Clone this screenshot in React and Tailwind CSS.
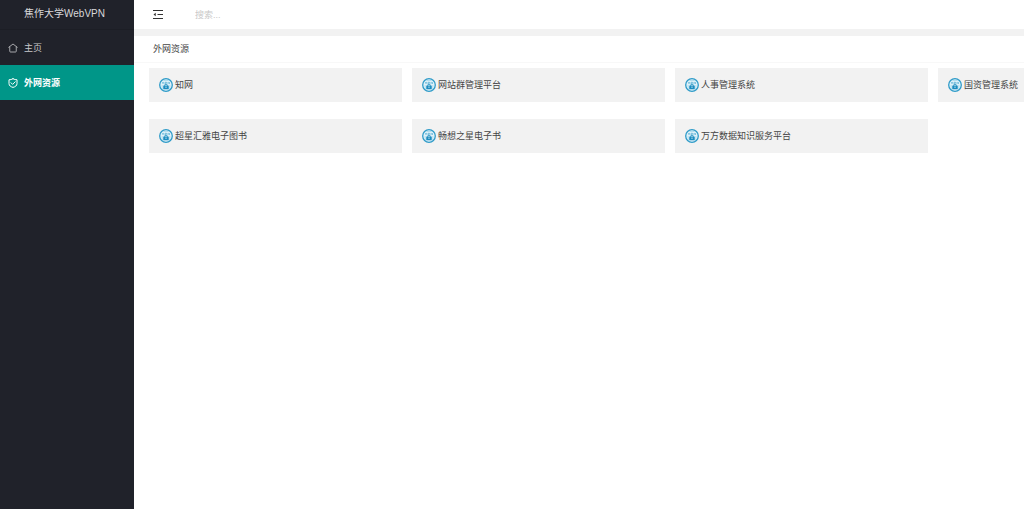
import React from 'react';

const resources = [
  '知网',
  '网站群管理平台',
  '人事管理系统',
  '国资管理系统',
  '超星汇雅电子图书',
  '畅想之星电子书',
  '万方数据知识服务平台',
];

function HomeIcon() {
  return (
    <svg viewBox="0 0 20 20" className="size-[10px] shrink-0" fill="none" stroke="currentColor" strokeWidth="1.6" strokeLinejoin="round" strokeLinecap="round" aria-hidden="true">
      <path d="M1.500 8.500 10 2l8.500 6.500M3.500 8v8.500q0 1.500 1.500 1.500h10q1.500 0 1.500-1.500V8" />
    </svg>
  );
}

function ShieldIcon() {
  return (
    <svg viewBox="0 0 20 20" className="size-[10px] shrink-0" fill="none" stroke="currentColor" strokeWidth="2" strokeLinejoin="round" strokeLinecap="round" aria-hidden="true">
      <path d="M10 1.500C7.500 3 5 3.500 2 3.500V11c0 4.500 3.500 6.500 8 7.800 4.500-1.300 8-3.300 8-7.800V3.500c-3 0-5.500-.5-8-2Z" />
      <path d="m6 9.500 3.200 3.200L14.500 7.500" />
    </svg>
  );
}

function FoldIcon() {
  return (
    <svg viewBox="0 0 20 18" className="h-[9px] w-[10px]" fill="none" stroke="currentColor" strokeWidth="2" aria-hidden="true">
      <path d="M0 1h20M9 9h11M0 17h20" />
      <path d="M5.500 5.500v7L1 9Z" fill="currentColor" stroke="none" />
    </svg>
  );
}

function VpnIcon() {
  return (
    <svg viewBox="0 0 28 28" className="size-[14px] shrink-0" fill="none" aria-hidden="true">
      <circle cx="14" cy="14" r="12.600" fill="#dff1f9" stroke="#2f9bc8" strokeWidth="2.600" />
      <path d="M5 16h3M20 16h3M6 20h2M20 20h2M9 5.500c3-1.500 7-1.500 10 0" stroke="#8ccbe4" strokeWidth="1.400" />
      <path d="M6.500 8l1.500 3.500L9.500 8M12 12V8.500h3v2h-3M18 12V8.500l3 3V8" stroke="#4aa9d0" strokeWidth="1.200" />
      <path d="M11 15.500V15a3 2.500 0 0 1 6 0v.5" stroke="#1d8dc0" strokeWidth="1.600" />
      <rect x="8.500" y="15" width="11" height="7.500" rx="1" fill="#1d8dc0" />
      <path d="M14 17v3" stroke="#e8f6fc" strokeWidth="1.600" />
    </svg>
  );
}

export default function App() {
  return (
    <div className="flex min-h-screen bg-white font-['Liberation_Sans','Noto_Sans_CJK_SC',sans-serif] text-[9px] leading-4 text-[#444]">
      <aside className="w-[134px] shrink-0 bg-[#20222a] text-[#c8c9cb]">
        <h1 className="flex h-[30px] items-center border-b border-[#1c1e25] pb-0.5 pl-6 text-[10px] text-[#d8d8da]">
          焦作大学WebVPN
        </h1>
        <nav aria-label="主导航">
          <a href="#home" className="flex h-[35px] items-center gap-1.5 pl-2">
            <HomeIcon />
            主页
          </a>
          <a href="#resources" aria-current="page" className="flex h-[35px] items-center gap-1.5 bg-[#009688] pl-2 font-bold text-white">
            <ShieldIcon />
            外网资源
          </a>
        </nav>
      </aside>
      <div className="min-w-0 flex-1 overflow-hidden">
        <header className="flex h-[29px] items-center gap-8 pl-[19px]">
          <button type="button" aria-label="折叠菜单" className="text-[#333]">
            <FoldIcon />
          </button>
          <input type="text" aria-label="搜索" placeholder="搜索..." className="w-40 bg-transparent outline-none placeholder:text-[#c8c8c8]" />
        </header>
        <main className="border-t-[7px] border-[#f2f2f2]">
          <h2 className="flex h-[27px] items-center border-b border-[#f8f8f8] pl-[19px]">外网资源</h2>
          <ul className="grid grid-cols-[repeat(4,253px)] gap-x-[10px] gap-y-[17px] pt-[5px] pl-[15px]">
            {resources.map((name) => (
              <li key={name}>
                <a href="#resource" className="flex h-[34px] items-center gap-[2px] bg-[#f2f2f2] pl-[10px]">
                  <VpnIcon />
                  {name}
                </a>
              </li>
            ))}
          </ul>
        </main>
      </div>
    </div>
  );
}
